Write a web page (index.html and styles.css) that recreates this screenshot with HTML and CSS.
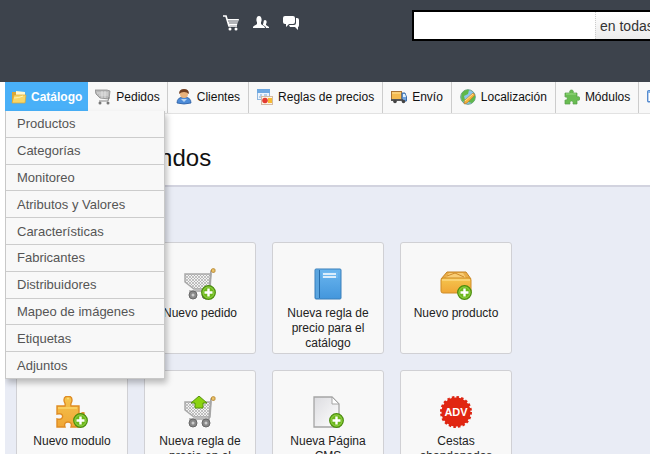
FILE: index.html
```html
<!DOCTYPE html>
<html lang="es">
<head>
<meta charset="utf-8">
<title>Cuadro de mandos</title>
<link rel="stylesheet" href="styles.css">
</head>
<body>
<svg class="defs" aria-hidden="true">
  <defs>
    <linearGradient id="gold" x1="0" y1="0" x2="0" y2="1"><stop offset="0" stop-color="#f5c54e"/><stop offset="1" stop-color="#f0a636"/></linearGradient>
    <linearGradient id="blue" x1="0" y1="0" x2="0" y2="1"><stop offset="0" stop-color="#6bb6ef"/><stop offset="1" stop-color="#4396dc"/></linearGradient>
    <linearGradient id="paper" x1="0" y1="0" x2="1" y2="1"><stop offset="0" stop-color="#dcdce0"/><stop offset="1" stop-color="#ffffff"/></linearGradient>
    <pattern id="mesh" width="3" height="3" patternUnits="userSpaceOnUse"><rect width="3" height="3" fill="#f2f2f2"/><path d="M0 0l3 3M3 0L0 3" stroke="#9d9d9d" stroke-width=".6"/></pattern>
    <g id="plus"><circle cx="24.500" cy="24.500" r="6.800" fill="#6cb71b" stroke="#4a8c0d" stroke-width="1.200"/><circle cx="24.500" cy="24.500" r="5.500" fill="none" stroke="#a4dc5c" stroke-width=".7"/><path d="M24.500 20.500v8M20.500 24.500h8" stroke="#fff" stroke-width="2.400"/></g>
    <g id="cart-body"><path d="M1 6h26l-1 15H10L1 14z" fill="url(#mesh)" stroke="#a9a9a9" stroke-width="1.500"/><path d="M29 3h-2l-2 20H5" fill="none" stroke="#a5a5a5" stroke-width="1.700"/><rect x="27.500" y=".8" width="3.500" height="3.500" rx="1" fill="#edc56a" stroke="#ba8a37"/><circle cx="9" cy="27" r="4" fill="#888" stroke="#686868"/><circle cx="9" cy="27" r="1.500" fill="#ccc"/><circle cx="22" cy="27" r="4" fill="#888" stroke="#686868"/><circle cx="22" cy="27" r="1.500" fill="#ccc"/></g>
  </defs>
</svg>

<header class="header">
  <div class="alerts">
    <a href="#" aria-label="Pedidos nuevos"><svg width="18" height="18" viewBox="0 0 18 18"><path d="M1 2h3l3 10h8" fill="none" stroke="#fff" stroke-width="1.700"/><path d="M5 5h12l-2 6H7z" fill="#fff"/><path d="M6 7h10M7 9h9" stroke="#3d434c" stroke-width=".8"/><circle cx="8" cy="15" r="1.500" fill="#fff"/><circle cx="14" cy="15" r="1.500" fill="#fff"/></svg></a>
    <a href="#" aria-label="Clientes nuevos"><svg width="18" height="18" viewBox="0 0 18 18"><path d="M1 14v-1c0-1 3-2 4-3V8c-1-1-1-6 2-6s3 5 2 6v2c1 1 4 2 4 4z" fill="#fff"/><path d="M11 10c1-1 0-4 2-4s2 3 1 4v1l3 2v1h-3c0-2-2-2-3-3z" fill="#fff"/></svg></a>
    <a href="#" aria-label="Mensajes nuevos"><svg width="18" height="18" viewBox="0 0 18 18"><path d="M14 4h1q2 0 2 2v5q0 2-1 2v3l-3-3H8l-1-2h5q2 0 2-2z" fill="#fff"/><path d="M3 2h8q2 0 2 2v4q0 2-2 2H7l-3 3v-3H3q-2 0-2-2V4q0-2 2-2z" fill="#fff"/></svg></a>
  </div>
  <form class="search">
    <input class="search-text" type="text" aria-label="Buscar">
    <select class="search-scope" aria-label="Ámbito de búsqueda"><option>en todas</option></select>
  </form>
</header>

<div class="page">
  <nav class="nav">
    <div class="tab active">
      <a class="tab-link" href="#"><svg width="16" height="16" viewBox="0 0 16 16"><path d="M1 3h5l1 2h7v9H1z" fill="#dba736"/><path d="M5 2l9 1v5H5z" fill="#fff8cf"/><path d="M1 14l2-8h12l-1 8z" fill="#f8d768" stroke="#dba736" stroke-width=".7"/><path d="M3 9q5 0 9-2" stroke="#fff3b4" fill="none"/></svg>Catálogo</a>
      <ul class="menu">
        <li><a href="#">Productos</a></li>
        <li><a href="#">Categorías</a></li>
        <li><a href="#">Monitoreo</a></li>
        <li><a href="#">Atributos y Valores</a></li>
        <li><a href="#">Características</a></li>
        <li><a href="#">Fabricantes</a></li>
        <li><a href="#">Distribuidores</a></li>
        <li><a href="#">Mapeo de imágenes</a></li>
        <li><a href="#">Etiquetas</a></li>
        <li><a href="#">Adjuntos</a></li>
      </ul>
    </div>
    <div class="tab"><a class="tab-link" href="#"><svg width="16" height="16" viewBox="0 0 16 16"><path d="M0 1h12l3 1-1 8-9-1-4-4z" fill="#b9b9b9" stroke="#888" stroke-width=".8"/><path d="M2 4h11M4 6h9M7 2v7M10 2v7" stroke="#eee" stroke-width=".7"/><path d="M14 8l-1 4H4" fill="none" stroke="#888"/><circle cx="5" cy="14" r="1.500" fill="#777"/><circle cx="13" cy="14" r="1.500" fill="#777"/></svg>Pedidos</a></div>
    <div class="tab"><a class="tab-link" href="#"><svg width="16" height="16" viewBox="0 0 16 16"><path d="M1 14q0-6 7-6t7 6q-7 2-14 0z" fill="#4c8bd8" stroke="#285b9f" stroke-width=".8"/><circle cx="8" cy="5" r="4" fill="#e9b27c"/><path d="M3 5q0-5 5-5t5 5q-2-2-5-2T3 5z" fill="#713e20"/><path d="M5 10l3 3 3-3" fill="#b7d5f4"/></svg>Clientes</a></div>
    <div class="tab"><a class="tab-link" href="#"><svg width="16" height="16" viewBox="0 0 16 16"><rect x=".5" y=".5" width="12" height="10" fill="#edf4fc" stroke="#91b7df"/><path d="M0 0h13v4H0z" fill="#6ea8e1"/><path d="M3 6h2M7 6h3M2 8h2" stroke="#7caad7"/><rect x="4.500" y="7.500" width="11" height="8" fill="#fff3e5" stroke="#d2b9a3"/><circle cx="8" cy="11.500" r="2.800" fill="#e33b32"/><rect x="11" y="9" width="4" height="5" fill="#f7bb32"/></svg>Reglas de precios</a></div>
    <div class="tab"><a class="tab-link" href="#"><svg width="16" height="16" viewBox="0 0 16 16"><rect x=".5" y="2.500" width="10" height="8" fill="#f4ba50" stroke="#aa7434"/><path d="M1 4h9" stroke="#ffe198"/><path d="M11 4h3l1.500 4v4H11z" fill="#70a2dd" stroke="#3d6ea9"/><path d="M12 5h2l1 3h-3z" fill="#dff1ff"/><path d="M0 11h12" stroke="#555" stroke-width="2"/><circle cx="4" cy="12.500" r="1.800" fill="#444"/><circle cx="12.500" cy="12.500" r="1.800" fill="#444"/></svg>Envío</a></div>
    <div class="tab"><a class="tab-link" href="#"><svg width="16" height="16" viewBox="0 0 16 16"><circle cx="8" cy="8" r="7.300" fill="#8dc5ec" stroke="#6b9e8a"/><path d="M2 4q3-4 7-3l-1 4-4 2 1 4-2 2q-3-4-1-9zM10 8l5-2q1 5-3 8l-4-1z" fill="#61b84b"/><path d="M4 15l1-4 8-7 2 2-8 8z" fill="#f5b13a" stroke="#ba7a27" stroke-width=".6"/><path d="M5 12l8-7" stroke="#ffe391"/></svg>Localización</a></div>
    <div class="tab"><a class="tab-link" href="#"><svg width="16" height="16" viewBox="0 0 16 16"><path d="M1 4h5c-2-4 5-4 3 0h4v4c4-2 4 5 0 3v4H9c1-4-4-4-3 0H1v-4c3 1 3-4 0-3z" fill="#69bd52" stroke="#559c45" stroke-width=".7"/><path d="M2 5h10" stroke="#9bdc83"/></svg>Módulos</a></div>
    <div class="tab"><a class="tab-link" href="#" aria-label="Empleados"><svg width="16" height="16" viewBox="0 0 16 16"><rect x=".7" y="1.700" width="14" height="11" rx="1" fill="#fff" stroke="#568bcf" stroke-width="1.400"/><path d="M1 3h14" stroke="#83b3e8" stroke-width="2"/></svg></a></div>
  </nav>
  <h1 class="title">Cuadro de mandos</h1>
  <main class="shortcuts">
    <a class="card card-order" href="#"><svg width="32" height="32" viewBox="0 0 32 32"><use href="#cart-body"/><use href="#plus"/></svg><span>Nuevo pedido</span></a>
    <a class="card" href="#"><svg width="32" height="32" viewBox="0 0 32 32"><rect x="3" y="1" width="26" height="30" rx="1" fill="url(#blue)" stroke="#3b7fb9"/><path d="M4 2h4v28H4z" fill="#5ba5df"/><path d="M7.500 2v28" stroke="#266dab"/><path d="M10 4h16v6H10z" fill="#6eb7ef"/><path d="M11 6h13M11 9h13" stroke="#fff" stroke-width="1.300"/></svg><span>Nueva regla de precio para el catálogo</span></a>
    <a class="card" href="#"><svg width="32" height="32" viewBox="0 0 32 32"><path d="M1 11l6-7h19l5 7z" fill="#e9ad48" stroke="#c58325"/><path d="M9 5h14l3 5H6z" fill="#f8cd75"/><path d="M7 8l8-3 9 4" fill="none" stroke="#cf8b2b"/><rect x="1" y="10" width="30" height="15" rx="2" fill="url(#gold)" stroke="#ce8c29"/><path d="M2 12h28" stroke="#ffe39a"/><use href="#plus"/></svg><span>Nuevo producto</span></a>
    <a class="card" href="#"><svg width="32" height="32" viewBox="0 0 32 32"><path d="M1 10h8c1-3-1-3-1-6 0-5 8-5 8 0 0 3-2 3-1 6h8v8c2 0 3-2 5-1v7l-5-1v8h-8c1-3 0-5-3-5s-4 2-3 5H1v-8c7 2 8-7 0-5z" fill="url(#gold)" stroke="#df8c23" stroke-width="1.400"/><path d="M2 12h19M11 3q1-1 2 0" fill="none" stroke="#ffe47c"/><use href="#plus"/></svg><span>Nuevo modulo</span></a>
    <a class="card" href="#"><svg width="32" height="32" viewBox="0 0 32 32"><use href="#cart-body"/><path d="M15 0l8 7h-4v5h-8V7H7z" fill="#8bd311" stroke="#579011"/></svg><span>Nueva regla de precio en el</span></a>
    <a class="card" href="#"><svg width="32" height="32" viewBox="0 0 32 32"><path d="M2 1h18l7 7v23H2z" fill="url(#paper)" stroke="#a5a5a5" stroke-width="1.300"/><path d="M20 1v7h7z" fill="#fff" stroke="#a5a5a5"/><use href="#plus"/></svg><span>Nueva Página CMS</span></a>
    <a class="card" href="#"><svg width="32" height="32" viewBox="0 0 32 32"><circle cx="16" cy="16" r="14.500" fill="#dc2411" stroke="#dc2411" stroke-width="3" stroke-dasharray="2.500 2.056"/><circle cx="16" cy="16" r="14" fill="#e12611"/><text class="badge-text" x="16" y="20" text-anchor="middle">ADV</text></svg><span>Cestas abandonadas</span></a>
  </main>
</div>
</body>
</html>
```
FILE: styles.css
```css
* {
  box-sizing: border-box;
}

html,
body {
  height: 100%;
}

body {
  margin: 0;
  display: flex;
  flex-direction: column;
  overflow: hidden;
  background: #fff;
  color: #222;
  font-family: "Liberation Sans", Arial, sans-serif;
  font-size: 12px;
}

a {
  color: inherit;
  text-decoration: none;
}

svg {
  display: block;
  flex: none;
}

.defs {
  position: absolute;
  width: 0;
  height: 0;
}

.header {
  display: flex;
  flex: none;
  align-items: flex-start;
  padding: 10px 0 41px 222px;
  background: #3d434c;
}

.alerts {
  display: flex;
  gap: 12px;
  padding-top: 4px;
}

.search {
  display: flex;
  flex: 1;
  height: 31px;
  margin-left: 112px;
  border: 2px solid #000;
  border-right: 0;
  background: #fff;
}

.search-text {
  flex: 1;
  min-width: 0;
  border: 0;
  background: #fff;
}

.search-scope {
  flex: none;
  width: 59px;
  margin: 0;
  padding: 0 0 0 4px;
  appearance: none;
  border: 0;
  border-left: 1px dotted #ccc;
  border-radius: 0;
  background: linear-gradient(#fff, #ececec);
  color: #333;
  font: 14px "Liberation Sans", Arial, sans-serif;
}

.page {
  display: flex;
  flex: 1;
  flex-direction: column;
  min-height: 0;
  margin-left: 5px;
  overflow: hidden;
  background: #e9ecf5;
}

.nav {
  display: flex;
  flex: none;
  height: 32px;
  border-bottom: 1px solid #e2e2e2;
  background: #f8f8f8;
}

.tab {
  position: relative;
  flex: none;
  border-right: 1px solid #ccc;
}

.tab-link {
  display: flex;
  align-items: center;
  gap: 5px;
  height: 30px;
  padding: 0 8px;
  color: #111;
}

.active {
  border-right: 0;
}

.active .tab-link {
  gap: 4px;
  height: 29px;
  padding: 0 6px;
  background: #49b0f8;
  color: #fff;
  font-weight: bold;
}

.tab:nth-child(2) .tab-link {
  padding: 0 7px;
}

.menu {
  position: absolute;
  z-index: 1;
  top: 29px;
  left: 0;
  display: flex;
  flex-direction: column;
  width: 160px;
  height: 268px;
  margin: 0;
  padding: 0;
  border: 1px solid #c8c8c8;
  border-top: 0;
  background: #f8f8f8;
  box-shadow: 2px 4px 6px rgba(0, 0, 0, 0.25);
  color: #555;
  font-size: 13px;
  list-style: none;
}

.menu li {
  display: flex;
  flex: 1;
  align-items: center;
  padding-left: 11px;
}

.menu li + li {
  border-top: 1px solid #ccc;
}

.title {
  flex: none;
  margin: 0;
  padding: 28px 2px 11px;
  border-bottom: 2px solid #d2d3df;
  background: #fff;
  color: #111;
  font-size: 24px;
  font-weight: normal;
  line-height: 32px;
}

.shortcuts {
  display: grid;
  grid-template-columns: repeat(4, 112px);
  grid-auto-rows: 112px;
  gap: 16px;
  padding: 55px 11px;
}

.card {
  display: flex;
  flex-direction: column;
  align-items: center;
  gap: 6px;
  padding: 25px 12px 0;
  border: 1px solid #d0d0d4;
  border-radius: 3px;
  background: #f8f8f8;
  line-height: 15px;
  text-align: center;
}

.card-order {
  grid-column-start: 2;
}

.badge-text {
  fill: #fff;
  font: bold 11px "Liberation Sans", Arial, sans-serif;
}
```
